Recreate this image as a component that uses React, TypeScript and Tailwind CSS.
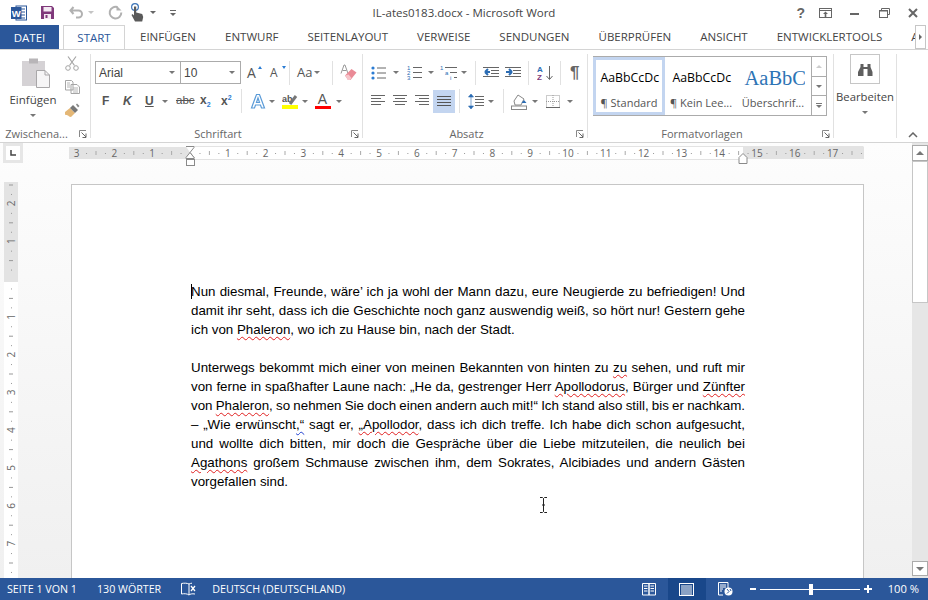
const ui = { fontFamily: '"Open Sans", "Noto Sans", sans-serif' }

function Caret({ className = 'ml-[4px]', color = 'border-t-[#777]' }: { className?: string; color?: string }) {
  return <span className={`inline-block w-0 h-0 border-x-[3px] border-x-transparent border-t-[3px] shrink-0 ${color} ${className}`} />
}

function Sep({ className = '' }: { className?: string }) {
  return <span className={`inline-block w-px h-[24px] bg-[#e1e1e1] shrink-0 ${className}`} />
}

function Launcher() {
  return (
    <svg width="8" height="8" viewBox="0 0 8 8" className="absolute right-[3px] top-[3px]">
      <path d="M0.5 7V0.5H7" fill="none" stroke="#888" />
      <path d="M2.5 2.5L7 7M7 3.5V7.5H3.5" fill="none" stroke="#666" />
    </svg>
  )
}

function Group({ width, label, children }: { width: string; label: string; children: React.ReactNode }) {
  return (
    <div className={`flex flex-col h-full border-r border-[#e1e1e1] shrink-0 ${width}`}>
      <div className="flex-1 min-h-0">{children}</div>
      <div className="relative h-[14px] -mb-[3px] pr-[17px] text-center text-[11px] leading-[14px] text-[#666]">
        {label}
        <Launcher />
      </div>
    </div>
  )
}

function Lines({ x1, x2, ys, color = '#666' }: { x1: number[]; x2: number[]; ys: number[]; color?: string }) {
  return (
    <svg width="16" height="14" viewBox="0 0 16 14">
      {ys.map((y, i) => (
        <rect key={i} x={x1[i % x1.length]} y={y} width={x2[i % x2.length] - x1[i % x1.length]} height="1" fill={color} />
      ))}
    </svg>
  )
}

function WordLogo() {
  return (
    <svg width="16" height="16" viewBox="0 0 16 16">
      <rect x="5" y="1" width="10.500" height="14" fill="#fff" stroke="#2b579a" />
      <path d="M9 4h5M9 7h5M9 10h5M9 13h5" stroke="#2b579a" />
      <rect x="0" y="2" width="10.500" height="12" fill="#2b579a" />
      <text x="5.200" y="11.500" textAnchor="middle" fontSize="9.500" fontWeight="700" fill="#fff" fontFamily="Liberation Sans">W</text>
    </svg>
  )
}

function TitleBar() {
  return (
    <div className="grid grid-cols-[1fr_auto_1fr] items-center h-[25px]">
      <div className="flex items-center pl-[11px] h-full">
        <WordLogo />
        <svg width="15" height="15" viewBox="0 0 15 15" className="ml-[13px]">
          <path d="M1 1h11l2 2v11H1z" fill="#80397b" />
          <rect x="3.500" y="2" width="8" height="4.500" fill="#f4eaf3" />
          <rect x="4" y="9" width="7" height="5" fill="#f4eaf3" />
          <rect x="5.500" y="10" width="2" height="3" fill="#80397b" />
        </svg>
        <svg width="15" height="13" viewBox="0 0 15 13" className="ml-[14px]">
          <path d="M4.500 1L1.500 4.500L4.500 8M2 4.500H9.500a3.500 3.500 0 0 1 0 7H7" fill="none" stroke="#b1b1b1" strokeWidth="2" />
        </svg>
        <Caret className="ml-[4px]" color="border-t-[#c4c4c4]" />
        <svg width="15" height="15" viewBox="0 0 15 15" className="ml-[14px]">
          <path d="M9.500 2.200A5.800 5.800 0 1 0 13.300 7.500" fill="none" stroke="#b1b1b1" strokeWidth="2" />
          <path d="M8.500 0.500V5.500H13.500z" fill="#b1b1b1" />
        </svg>
        <svg width="15" height="19" viewBox="0 0 15 19" className="ml-[7px]">
          <circle cx="5" cy="4" r="3.400" fill="none" stroke="#3f76b8" strokeWidth="1.200" />
          <path d="M4 3.500h2.200v6l6 1.500 1 3-1 4.500H5l-3.500-6.500 1-1 1.500 1.500z" fill="#5a5a5a" />
        </svg>
        <Caret className="ml-[5px]" color="border-t-[#666]" />
        <span className="ml-[14px] flex flex-col items-center gap-[2px]">
          <span className="w-[6px] h-px bg-[#666]" />
          <Caret className="" color="border-t-[#666]" />
        </span>
      </div>
      <div className="text-[11.500px] text-[#444] leading-none pt-[1px]">IL-ates0183.docx - Microsoft Word</div>
      <div className="flex items-center justify-end h-full pr-[10px]">
        <span className="text-[14px] font-bold text-[#666] leading-none" style={{ fontFamily: 'Liberation Sans' }}>?</span>
        <svg width="13" height="10" viewBox="0 0 13 10" className="ml-[14px]">
          <rect x="0.500" y="0.500" width="12" height="9" fill="none" stroke="#666" />
          <path d="M1 2.500h11" stroke="#666" />
          <path d="M6.500 3.500l-2.500 2.500h1.700v3h1.600v-3H9z" fill="#666" />
        </svg>
        <span className="ml-[18px] w-[9px] h-[2px] bg-[#666] mt-[3px]" />
        <svg width="11" height="10" viewBox="0 0 11 10" className="ml-[20px]">
          <path d="M2.500 2.500V0.500H10.500V6.500H8.500" fill="none" stroke="#666" />
          <rect x="0.500" y="2.500" width="8" height="7" fill="none" stroke="#666" />
          <path d="M0 3h9" stroke="#666" />
        </svg>
        <svg width="10" height="10" viewBox="0 0 10 10" className="ml-[18px]">
          <path d="M1 1l8 8M9 1l-8 8" stroke="#666" strokeWidth="2" />
        </svg>
      </div>
    </div>
  )
}

function TabBar() {
  const tabs = ['EINFÜGEN', 'ENTWURF', 'SEITENLAYOUT', 'VERWEISE', 'SENDUNGEN', 'ÜBERPRÜFEN', 'ANSICHT', 'ENTWICKLERTOOLS']
  return (
    <div className="relative flex items-stretch h-[25px] border-b border-[#d4d4d4] text-[11.500px] text-[#444] overflow-hidden">
      <div className="w-[59px] shrink-0 bg-[#2b579a] text-white flex items-center justify-center -mb-px">DATEI</div>
      <div className="ml-[4px] w-[62px] shrink-0 h-[25px] border border-b-white border-[#d4d4d4] bg-white text-[#2b579a] flex items-center justify-center">START</div>
      <div className="flex items-center gap-[29px] pl-[15px] shrink-0">
        {tabs.map(t => <span key={t}>{t}</span>)}
        <span>A</span>
      </div>
      <div className="absolute right-[2px] top-0 w-[11px] h-[24px] border border-[#c6c6c6] bg-white flex items-center justify-center">
        <span className="w-0 h-0 border-y-[3px] border-y-transparent border-l-[3px] border-l-[#666]" />
      </div>
    </div>
  )
}

function ClipboardGroup() {
  return (
    <Group width="w-[91px]" label="Zwischena...">
      <div className="flex h-full">
        <div className="w-[66px] shrink-0 flex flex-col items-center pt-[4px]">
          <svg width="30" height="31" viewBox="0 0 30 31" className="ml-[5px]">
            <rect x="1" y="3" width="23" height="25" fill="#d5d2d5" />
            <rect x="8" y="0.500" width="9" height="5" fill="#b8b5b8" />
            <path d="M15.500 12.500H24l4.500 4.500V29.500H15.500z" fill="#f6f5f6" stroke="#a9a7a9" />
            <path d="M24 12.500V17h4.500" fill="none" stroke="#a9a7a9" />
          </svg>
          <span className="text-[11.500px] leading-[16px] mt-[3px] text-[#444]">Einfügen</span>
          <Caret className="mt-[6px]" />
        </div>
        <div className="flex flex-col items-center gap-[9px] pt-[2px] -ml-[2px]">
          <svg width="14" height="15" viewBox="0 0 14 15">
            <path d="M3 0.500L9.500 9.500M11 0.500L4.500 9.500" stroke="#a5a5a5" strokeWidth="1.200" fill="none" />
            <circle cx="3" cy="12" r="2.300" fill="none" stroke="#a5a5a5" />
            <circle cx="11" cy="12" r="2.300" fill="none" stroke="#a5a5a5" />
          </svg>
          <svg width="15" height="14" viewBox="0 0 15 14">
            <path d="M0.500 0.500H6.500L8 2V10H0.500zM6 4.500H12L14.500 7V13.500H6z" fill="#fff" stroke="#a5a5a5" />
            <path d="M2 3h3M2 5h3M2 7h3M8 8h5M8 10h5M8 12h5" stroke="#b5b5b5" />
          </svg>
          <svg width="16" height="14" viewBox="0 0 16 14">
            <path d="M1 9l5-4 5 5-4 4c-2 0-2-1-3-1.500s-2 0-3-1z" fill="#e4b776" />
            <path d="M6 5l3-3 5 5-3 3z" fill="#777" />
            <path d="M12 1.500l1-1 2.500 2.500-1.500 1.500z" fill="#888" />
          </svg>
        </div>
      </div>
    </Group>
  )
}

function FontGroup() {
  return (
    <Group width="w-[272px]" label="Schriftart">
      <div className="flex items-center pl-[4px] pt-[7px] h-[30px] text-[#444]">
        <div className="flex items-center justify-between w-[86px] h-[23px] border border-[#ababab] px-[3px] text-[12px]" style={{ fontFamily: 'Liberation Sans' }}>
          Arial<Caret className="mr-[2px]" />
        </div>
        <div className="flex items-center justify-between w-[60px] h-[23px] border border-l-0 border-[#ababab] px-[3px] text-[12px]" style={{ fontFamily: 'Liberation Sans' }}>
          10<Caret className="mr-[2px]" />
        </div>
        <span className="relative w-[14px] ml-[6px] text-[14px] text-[#555] leading-none">A<span className="absolute -right-[1px] top-0 w-0 h-0 border-x-[2.500px] border-x-transparent border-b-[3px] border-b-[#2b7cd3]" /></span>
        <span className="relative w-[13px] ml-[9px] text-[12px] text-[#555] leading-none">A<span className="absolute -right-[3px] -top-[1px] w-0 h-0 border-x-[2.500px] border-x-transparent border-t-[3px] border-t-[#2b7cd3]" /></span>
        <Sep className="ml-[6px]" />
        <span className="ml-[7px] text-[13px] text-[#555] leading-none">Aa</span>
        <Caret className="ml-[2px]" />
        <Sep className="ml-[12px]" />
        <svg width="17" height="17" viewBox="0 0 17 17" className="ml-[7px]">
          <path d="M1 9.500L4 1h1l3 8.500M2.500 6.500h4" fill="none" stroke="#999" />
          <path d="M5 11.500l6.500-6.500 5 3.500-6 7.500H8z" fill="#ea8a96" />
          <path d="M5 11.500l3 4.500h2l1.500-2-3-3.500z" fill="#f7c5cb" />
        </svg>
      </div>
      <div className="flex items-center pl-[11px] mt-[5px] h-[24px] text-[#555] text-[12px] font-bold" style={{ fontFamily: 'Liberation Sans' }}>
        <span className="w-[21px]">F</span>
        <span className="w-[22px] italic">K</span>
        <span className="underline w-[12px]">U</span>
        <Caret className="ml-[5px]" />
        <span className="ml-[8px] w-[21px] line-through font-normal text-[11.500px]">abc</span>
        <span className="ml-[3px] w-[21px]">x<span className="text-[7px] text-[#2b7cd3] align-sub">2</span></span>
        <span className="w-[16px]">x<span className="text-[7px] text-[#2b7cd3] align-super">2</span></span>
        <Sep className="ml-[4px]" />
        <svg width="16" height="16" viewBox="0 0 16 16" className="ml-[8px]">
          <path d="M1.500 15L6.500 1.500h3L14.500 15h-3l-1-3h-5l-1 3zM6.500 9.500h3L8 5z" fill="#fff" stroke="#5a9bd8" strokeWidth="1.200" />
        </svg>
        <Caret className="ml-[3px]" />
        <span className="ml-[6px] w-[17px] flex flex-col items-center">
          <svg width="16" height="12" viewBox="0 0 16 12">
            <text x="0" y="9" fontSize="9" fill="#555" fontFamily="Liberation Sans">ab</text>
            <path d="M8 11l6-8" stroke="#777" strokeWidth="3" />
          </svg>
          <span className="w-[16px] h-[4px] bg-[#ffff00]" />
        </span>
        <Caret className="ml-[4px]" />
        <span className="ml-[6px] w-[17px] flex flex-col items-center leading-[12px] text-[14px] font-normal">
          A
          <span className="w-[16px] h-[3px] bg-[#f00] mt-[1px]" />
        </span>
        <Caret className="ml-[5px]" />
      </div>
    </Group>
  )
}

function Bullets() {
  return (
    <svg width="16" height="14" viewBox="0 0 16 14">
      <circle cx="2" cy="2" r="1.600" fill="#2b7cd3" /><circle cx="2" cy="7" r="1.600" fill="#2b7cd3" /><circle cx="2" cy="12" r="1.600" fill="#2b7cd3" />
      <path d="M6 2h9M6 7h9M6 12h9" stroke="#666" />
    </svg>
  )
}

function Numbering() {
  return (
    <svg width="16" height="15" viewBox="0 0 16 15">
      <text x="0" y="5" fontSize="6" fill="#2b6cb3" fontFamily="Liberation Sans">1</text>
      <text x="0" y="10" fontSize="6" fill="#2b6cb3" fontFamily="Liberation Sans">2</text>
      <text x="0" y="15" fontSize="6" fill="#2b6cb3" fontFamily="Liberation Sans">3</text>
      <path d="M6 2.500h9M6 7.500h9M6 12.500h9" stroke="#666" />
    </svg>
  )
}

function Multi() {
  return (
    <svg width="18" height="15" viewBox="0 0 18 15">
      <text x="0" y="5" fontSize="6" fill="#2b6cb3" fontFamily="Liberation Sans">1</text>
      <text x="5" y="10" fontSize="6" fill="#2b6cb3" fontFamily="Liberation Sans">a</text>
      <text x="10" y="15" fontSize="6" fill="#2b6cb3" fontFamily="Liberation Sans">i</text>
      <path d="M5 2.500h12M10 7.500h7M14 12.500h3" stroke="#666" />
    </svg>
  )
}

function Indent({ flip }: { flip?: boolean }) {
  return (
    <svg width="17" height="13" viewBox="0 0 17 13">
      <path d="M0 1.500h16M8 4.500h8M8 7.500h8M0 10.500h16" stroke="#666" />
      <path d={flip ? 'M7 6H2M2 6l3-3M2 6l3 3' : 'M1 6h6M7 6L4 3M7 6L4 9'} fill="none" stroke="#2b6cb3" strokeWidth="2" />
    </svg>
  )
}

function ParagraphGroup() {
  return (
    <Group width="w-[225px]" label="Absatz">
      <div className="flex items-center pl-[8px] pt-[7px] h-[30px]">
        <Bullets /><Caret className="ml-[6px]" />
        <span className="ml-[8px]"><Numbering /></span><Caret className="ml-[5px]" />
        <span className="ml-[6px]"><Multi /></span><Caret className="ml-[3px]" />
        <Sep className="ml-[8px]" />
        <span className="ml-[7px]"><Indent flip /></span>
        <span className="ml-[5px]"><Indent /></span>
        <Sep className="ml-[6px]" />
        <svg width="17" height="16" viewBox="0 0 17 16" className="ml-[8px]">
          <text x="0" y="7" fontSize="8" fontWeight="700" fill="#2b6cb3" fontFamily="Liberation Sans">A</text>
          <text x="0" y="15" fontSize="8" fontWeight="700" fill="#80397b" fontFamily="Liberation Sans">Z</text>
          <path d="M12.500 1v13M9.500 11l3 3.500 3-3.500" fill="none" stroke="#666" />
        </svg>
        <Sep className="ml-[6px]" />
        <span className="ml-[9px] text-[17px] font-bold text-[#666] leading-none" style={{ fontFamily: 'Liberation Sans' }}>¶</span>
      </div>
      <div className="flex items-center pl-[8px] mt-[5px] h-[24px]">
        <Lines x1={[0, 0]} x2={[14, 10]} ys={[1, 4, 7, 10]} />
        <span className="ml-[6px]"><Lines x1={[0, 2]} x2={[14, 12]} ys={[1, 4, 7, 10]} /></span>
        <span className="ml-[6px]"><Lines x1={[0, 4]} x2={[14, 14]} ys={[1, 4, 7, 10]} /></span>
        <span className="ml-[2px] w-[22px] h-[23px] bg-[#c3d5f0] flex items-center justify-center">
          <svg width="14" height="12" viewBox="0 0 14 12"><path d="M0 1.500h14M0 4.500h14M0 7.500h14M0 10.500h14" stroke="#555" /></svg>
        </span>
        <Sep className="ml-[4px]" />
        <svg width="17" height="17" viewBox="0 0 17 17" className="ml-[8px]">
          <path d="M3 1L0.500 4H5.500zM3 16L0.500 13H5.500zM3 3v11" fill="#2b6cb3" stroke="#2b6cb3" strokeWidth="0.600" />
          <path d="M7 3.500h9M7 6.500h9M7 9.500h9M7 12.500h9" stroke="#666" />
        </svg>
        <Caret className="ml-[3px]" />
        <Sep className="ml-[9px]" />
        <svg width="17" height="17" viewBox="0 0 17 17" className="ml-[7px]">
          <path d="M3 8l4-6 6 4-3 6H4z" fill="#fff" stroke="#888" />
          <path d="M13 7l2.500 3h-5z" fill="#2b6cb3" />
          <rect x="0.500" y="13" width="15" height="3.500" fill="#fff" stroke="#888" />
        </svg>
        <Caret className="ml-[4px]" />
        <svg width="14" height="13" viewBox="0 0 14 13" className="ml-[8px]">
          <rect x="0.500" y="0.500" width="13" height="12" fill="none" stroke="#999" strokeDasharray="1 1" />
          <path d="M7 0v13M0 6.500h14" stroke="#999" strokeDasharray="1 1" />
          <path d="M0 12.500h14" stroke="#666" />
        </svg>
        <Caret className="ml-[7px]" />
      </div>
    </Group>
  )
}

function StyleItem({ sample, label, selected, serif }: { sample: string; label: string; selected?: boolean; serif?: boolean }) {
  return (
    <div className={`w-[72px] h-full shrink-0 flex flex-col items-center overflow-hidden border-[3px] ${selected ? 'border-[#c3d5f0] -ml-px' : 'border-transparent'}`}>
      <div
        className={`h-[36px] flex items-center pl-[3px] whitespace-nowrap w-[63px] overflow-hidden ${serif ? 'text-[20.500px] text-[#2e74b5]' : 'text-[12.300px] text-black'}`}
        style={serif ? { fontFamily: '"Liberation Serif", serif' } : ui}
      >
        {sample}
      </div>
      <div className="text-[11px] leading-[14px] text-[#555] whitespace-nowrap">{label}</div>
    </div>
  )
}

function StylesGroup() {
  return (
    <Group width="w-[246px]" label="Formatvorlagen">
      <div className="pl-[5px] pt-[2px]">
        <div className="flex w-[234px] h-[60px] border border-[#ababab]">
          <StyleItem sample="AaBbCcDc" label="¶ Standard" selected />
          <StyleItem sample="AaBbCcDc" label="¶ Kein Lee..." />
          <StyleItem sample="AaBbC" label="Überschrif..." serif />
          <div className="ml-auto w-[15px] flex flex-col border-l border-[#ababab]">
            <div className="h-[20px] flex items-center justify-center border-b border-[#ababab]"><span className="w-0 h-0 border-x-[3px] border-x-transparent border-b-[3px] border-b-[#ccc]" /></div>
            <div className="h-[19px] flex items-center justify-center border-b border-[#ababab]"><Caret className="" /></div>
            <div className="flex-1 flex flex-col items-center justify-center gap-[1px]"><span className="w-[6px] h-px bg-[#777]" /><Caret className="" /></div>
          </div>
        </div>
      </div>
    </Group>
  )
}

function EditGroup() {
  return (
    <div className="flex flex-col items-center w-[63px] h-full border-r border-[#e1e1e1] shrink-0">
      <div className="w-[30px] h-[30px] border border-[#c6c6c6] flex items-center justify-center">
        <svg width="15" height="13" viewBox="0 0 15 13">
          <path d="M2.500 1h3v3h4V1h3v3l2 5v4H9.500V6h-4v7H0V9l2.500-5z" fill="#5f5f5f" />
          <path d="M7 6h1v2H7z" fill="#fff" />
        </svg>
      </div>
      <span className="text-[11.300px] leading-[14px] mt-[6px] text-[#444]">Bearbeiten</span>
      <Caret className="mt-[7px]" />
    </div>
  )
}

function Ribbon() {
  return (
    <div className="relative flex items-stretch h-[93px] pt-[4px] pb-[4px] border-b border-[#d4d4d4] bg-white" style={ui}>
      <ClipboardGroup />
      <FontGroup />
      <ParagraphGroup />
      <StylesGroup />
      <EditGroup />
      <svg width="10" height="6" viewBox="0 0 10 6" className="absolute right-[10px] bottom-[4px]">
        <path d="M1 5l4-4 4 4" fill="none" stroke="#666" strokeWidth="1.500" />
      </svg>
    </div>
  )
}

const CM = 37.8

function HRuler() {
  const nums = Array.from({ length: 22 }, (_, i) => i - 3)
  const zero = 121
  return (
    <svg width="800" height="24" viewBox="0 0 800 24" className="block overflow-visible">
      <rect x="0" y="4" width="795" height="12" fill="#fff" />
      <rect x="0" y="4" width="121" height="12" fill="#e3e3e3" />
      <rect x="674" y="4" width="121" height="12" fill="#e3e3e3" />
      <path d="M121 3.500H794.500" stroke="#e3e3e3" />
      <path d="M121 16.500H674" stroke="#e3e3e3" />
      {nums.map(n => {
        const x = zero + n * CM
        return (
          <g key={n}>
            {n !== 0 && n < 18 && x > 0 && (
              <text x={x} y="14" textAnchor="middle" fontSize="10" fill="#666" style={ui}>{Math.abs(n)}</text>
            )}
            {x + CM * 0.75 < 795 && x + CM > 0 && n < 18 && (
              <>
                {x + CM * 0.25 > 0 && <rect x={x + CM * 0.25} y="10" width="1" height="1" fill="#999" />}
                {x + CM * 0.5 > 0 && <rect x={x + CM * 0.5} y="8" width="1" height="4" fill="#aaa" />}
                {x + CM * 0.75 > 0 && <rect x={x + CM * 0.75} y="10" width="1" height="1" fill="#999" />}
              </>
            )}
          </g>
        )
      })}
      <path d="M117 3.500h8v1l-4 5 4 5v1" fill="#fff" stroke="#8a8a8a" />
      <path d="M117 15.500v-1l4-5 4 5v1z" fill="#fff" stroke="#8a8a8a" />
      <rect x="117.500" y="16.500" width="8" height="6" fill="#fff" stroke="#8a8a8a" />
      <path d="M670 16.500v-2l4-4 4 4v6h-8z" fill="#fff" stroke="#8a8a8a" />
    </svg>
  )
}

function VRuler() {
  const nums = [-2, -1, 1, 2, 3, 4, 5, 6, 7, 8]
  const zero = 97
  const ticks = Array.from({ length: 44 }, (_, i) => i * 0.25 * CM + zero - 3 * CM)
  return (
    <svg width="14" height="396" viewBox="0 0 14 396" className="block">
      <rect x="0" y="0" width="14" height="396" fill="#fff" />
      <rect x="0" y="0" width="14" height="100" fill="#e3e3e3" />
      {ticks.map((y, i) => {
        if (y < 2 || i % 4 === 0) return null
        return <rect key={i} x={i % 2 === 0 ? 5 : 7} y={y} width={i % 2 === 0 ? 4 : 1} height="1" fill="#999" />
      })}
      {nums.map(n => (
        <text key={n} x="0" y="0" textAnchor="middle" fontSize="10" fill="#666" style={ui} transform={`translate(10.500 ${zero + n * CM}) rotate(-90)`}>{Math.abs(n)}</text>
      ))}
    </svg>
  )
}

function Bad({ children }: { children: React.ReactNode }) {
  return <span className="underline decoration-wavy decoration-[#e02020] decoration-1 underline-offset-[2px]">{children}</span>
}

function Line({ children, last }: { children: React.ReactNode; last?: boolean }) {
  return <div className={`h-[19px] leading-[19px] ${last ? 'whitespace-nowrap' : 'text-justify [text-align-last:justify] [word-spacing:-1px]'}`}>{children}</div>
}

function Page() {
  return (
    <div className="ml-[53px] mt-[2px] w-[793px] border border-b-0 border-[#c6c6c6] bg-white pt-[97px] pl-[119px] overflow-hidden relative">
      <div className="w-[554px] text-[13.330px] text-black" style={{ fontFamily: '"Liberation Sans", Arial, sans-serif' }}>
        <Line>Nun diesmal, Freunde, wäre’ ich ja wohl der Mann dazu, eure Neugierde zu befriedigen! Und</Line>
        <Line>damit ihr seht, dass ich die Geschichte noch ganz auswendig weiß, so hört nur! Gestern gehe</Line>
        <Line last>ich von <Bad>Phaleron</Bad>, wo ich zu Hause bin, nach der Stadt.</Line>
        <Line last>{'\u00a0'}</Line>
        <Line>Unterwegs bekommt mich einer von meinen Bekannten von hinten zu <Bad>zu</Bad> sehen, und ruft mir</Line>
        <Line>von ferne in spaßhafter Laune nach: „He da, gestrenger Herr <Bad>Apollodorus</Bad>, Bürger und <Bad>Zünfter</Bad></Line>
        <Line>von <Bad>Phaleron</Bad>, so nehmen Sie doch einen andern auch mit!“ Ich stand also still, bis er nachkam.</Line>
        <Line>– „Wie erwünscht<span className="underline decoration-wavy decoration-[#2040d0] decoration-1 underline-offset-[2px]">,“</span> sagt er, <Bad>„Apollodor</Bad>, dass ich dich treffe. Ich habe dich schon aufgesucht,</Line>
        <Line>und wollte dich bitten, mir doch die Gespräche über die Liebe mitzuteilen, die neulich bei</Line>
        <Line><Bad>Agathons</Bad> großem Schmause zwischen ihm, dem Sokrates, Alcibiades und andern Gästen</Line>
        <Line last>vorgefallen sind.</Line>
      </div>
      <span className="absolute left-[119px] top-[99px] w-px h-[15px] bg-black" />
    </div>
  )
}

function ScrollBar() {
  return (
    <div className="w-[16px] h-full bg-[#e6e6e6] flex flex-col pt-[2px] pb-[2px] shrink-0">
      <div className="h-[16px] border border-[#ababab] bg-white flex items-center justify-center shrink-0">
        <span className="w-0 h-0 border-x-[4px] border-x-transparent border-b-[4px] border-b-[#777]" />
      </div>
      <div className="h-[142px] border border-[#c6c6c6] bg-white shrink-0" />
      <div className="flex-1" />
      <div className="h-[15px] border border-[#ababab] bg-white flex items-center justify-center shrink-0">
        <span className="w-0 h-0 border-x-[4px] border-x-transparent border-t-[4px] border-t-[#777]" />
      </div>
    </div>
  )
}

function Workspace() {
  return (
    <div className="relative flex flex-1 min-h-0 bg-gradient-to-b from-[#fdfdfd] to-[#f0f0f0]">
      <div className="flex flex-col flex-1 min-w-0">
        <div className="flex h-[39px] shrink-0">
          <div className="ml-[3px] w-[20px] h-[20px] bg-[#e6e6e6] flex items-center justify-center">
            <span className="w-[14px] h-[14px] bg-white flex items-center justify-center">
              <svg width="6" height="6" viewBox="0 0 6 6"><path d="M1 0v5h5" fill="none" stroke="#444" strokeWidth="1.500" /></svg>
            </span>
          </div>
          <div className="ml-[46px]"><HRuler /></div>
        </div>
        <div className="flex flex-1 min-h-0 pl-[4px]">
          <VRuler />
          <Page />
        </div>
      </div>
      <ScrollBar />
      <svg width="9" height="16" viewBox="0 0 9 16" className="absolute left-[539px] top-[354px]">
        <path d="M1 0.500h2.500l1 1 1-1H8M4.500 1.500v13M1 15.500h2.500l1-1 1 1H8M3 8h3" fill="none" stroke="#222" />
      </svg>
    </div>
  )
}

function StatusBar() {
  return (
    <div className="flex items-center h-[22px] bg-[#2b579a] text-white text-[10.700px] shrink-0" style={ui}>
      <span className="ml-[7px]">SEITE 1 VON 1</span>
      <span className="ml-[20px]">130 WÖRTER</span>
      <svg width="16" height="14" viewBox="0 0 16 14" className="ml-[20px]">
        <path d="M8 2C6 1 3 1 0.500 1.500V12C3 11.500 6 11.500 8 13V2zM8 2C9 1.500 10 1.300 11 1.200M8 13C9 12 11 11.500 14 12" fill="none" stroke="#fff" />
        <path d="M10 4l4 5M14 4l-4 5" stroke="#fff" strokeWidth="1.300" />
      </svg>
      <span className="ml-[15px]">DEUTSCH (DEUTSCHLAND)</span>
      <div className="ml-auto flex items-center h-full">
        <svg width="14" height="14" viewBox="0 0 14 14">
          <path d="M0.500 1.500H7V13H0.500zM7 1.500H13.500V13H7z" fill="none" stroke="#fff" />
          <path d="M2 4h3.500M2 6.500h3.500M2 9h3.500M8.500 4H12M8.500 6.500H12M8.500 9H12" stroke="#fff" />
        </svg>
        <div className="ml-[12px] w-[38px] h-full bg-[#19478a] flex items-center justify-center">
          <svg width="15" height="13" viewBox="0 0 15 13">
            <rect x="0.500" y="0.500" width="14" height="12" fill="none" stroke="#fff" />
            <path d="M2 3h11M2 5h11M2 7h11M2 9h11M2 11h11" stroke="#fff" />
          </svg>
        </div>
        <svg width="15" height="14" viewBox="0 0 15 14" className="ml-[12px]">
          <path d="M0.500 0.500H10V7M5 13H0.500V0.500" fill="none" stroke="#fff" />
          <path d="M2 3h6M2 5h6M2 7h3M2 9h2" stroke="#fff" />
          <circle cx="10.500" cy="9.500" r="4" fill="#fff" />
          <path d="M9 7l2 2.500-2 2M12 7l1 2" stroke="#2b579a" fill="none" />
        </svg>
        <span className="ml-[17px] w-[6px] h-[2px] bg-white" />
        <div className="relative ml-[4px] w-[100px] h-px bg-white">
          <span className="absolute left-[49px] -top-[5px] w-[4px] h-[11px] bg-white" />
        </div>
        <svg width="8" height="8" viewBox="0 0 8 8" className="ml-[4px]"><path d="M0 4h8M4 0v8" stroke="#fff" strokeWidth="2" /></svg>
        <span className="ml-[16px] mr-[9px] text-[11.200px]">100 %</span>
      </div>
    </div>
  )
}

export default function App() {
  return (
    <div className="flex flex-col w-[928px] h-[600px] overflow-hidden bg-white" style={ui}>
      <TitleBar />
      <TabBar />
      <Ribbon />
      <Workspace />
      <StatusBar />
    </div>
  )
}
